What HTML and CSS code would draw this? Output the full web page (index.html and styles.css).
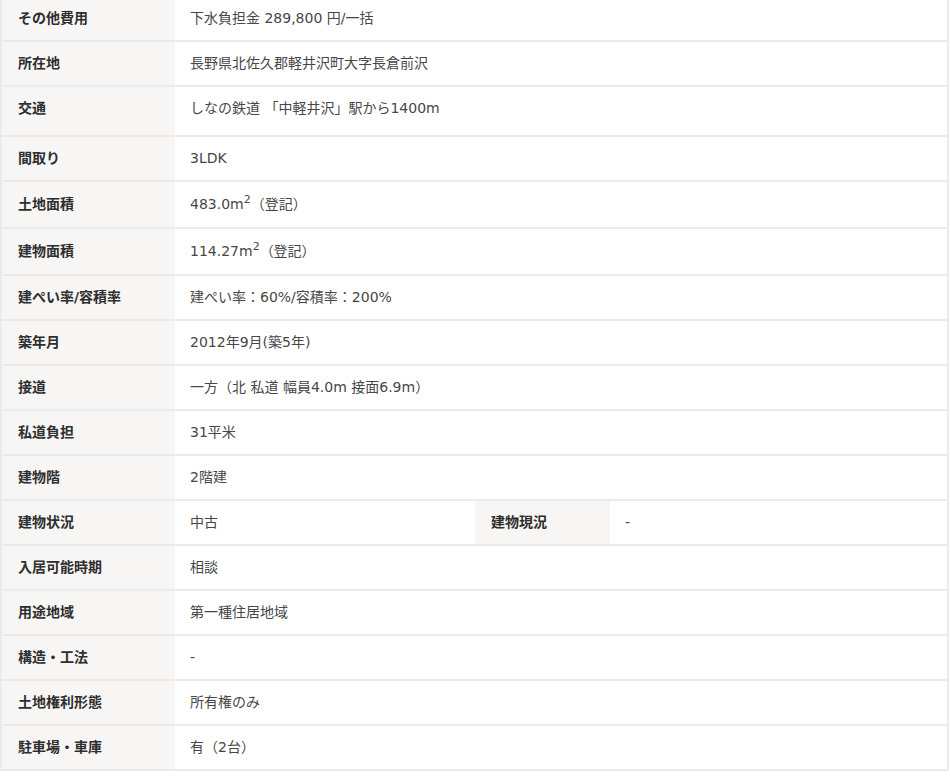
FILE: index.html
```html
<!DOCTYPE html>
<html lang="ja">
<head>
<meta charset="utf-8">
<title>物件概要</title>
<link rel="stylesheet" href="styles.css">
</head>
<body>
<table class="spec">
  <colgroup>
    <col class="c1"><col class="c2"><col class="c3"><col class="c4">
  </colgroup>
  <tbody>
    <tr><th>その他費用</th><td colspan="3">下水負担金 289,800 円/一括</td></tr>
    <tr><th>所在地</th><td colspan="3">長野県北佐久郡軽井沢町大字長倉前沢</td></tr>
    <tr class="tall"><th>交通</th><td colspan="3">しなの鉄道 「中軽井沢」駅から1400m</td></tr>
    <tr><th>間取り</th><td colspan="3">3LDK</td></tr>
    <tr class="sup-row"><th>土地面積</th><td colspan="3">483.0m<sup>2</sup>（登記）</td></tr>
    <tr class="sup-row"><th>建物面積</th><td colspan="3">114.27m<sup>2</sup>（登記）</td></tr>
    <tr><th>建ぺい率/容積率</th><td colspan="3">建ぺい率：60%/容積率：200%</td></tr>
    <tr><th>築年月</th><td colspan="3">2012年9月(築5年)</td></tr>
    <tr><th>接道</th><td colspan="3">一方（北 私道 幅員4.0m 接面6.9m）</td></tr>
    <tr><th>私道負担</th><td colspan="3">31平米</td></tr>
    <tr><th>建物階</th><td colspan="3">2階建</td></tr>
    <tr><th>建物状況</th><td>中古</td><th>建物現況</th><td>-</td></tr>
    <tr><th>入居可能時期</th><td colspan="3">相談</td></tr>
    <tr><th>用途地域</th><td colspan="3">第一種住居地域</td></tr>
    <tr><th>構造・工法</th><td colspan="3">-</td></tr>
    <tr><th>土地権利形態</th><td colspan="3">所有権のみ</td></tr>
    <tr><th>駐車場・車庫</th><td colspan="3">有（2台）</td></tr>
  </tbody>
</table>
</body>
</html>
```

FILE: styles.css
```css
html, body {
  margin: 0;
  padding: 0;
  background: #ffffff;
}

body {
  font-family: "DejaVu Sans", "Noto Sans CJK JP", sans-serif;
  font-size: 14px;
  color: #333333;
}

.spec {
  width: 949px;
  margin-top: -3px;
  table-layout: fixed;
  border-collapse: separate;
  border-spacing: 0;
  border-left: 2px solid #ebebeb;
  border-right: 2px solid #ebebeb;
}

.c1 { width: 173px; }
.c2 { width: 300px; }
.c3 { width: 135px; }
.c4 { width: 337px; }

.spec th,
.spec td {
  padding: 0 0 0 15px;
  height: 43px;
  line-height: 43px;
  border-bottom: 2px solid #ebebeb;
  text-align: left;
  vertical-align: top;
  white-space: nowrap;
}

.spec th {
  padding-left: 16px;
  background: #f7f6f4;
  font-weight: bold;
  color: #2e2e2e;
}

.spec td {
  font-weight: normal;
  color: #474747;
}

.spec tr.tall th,
.spec tr.tall td {
  height: 48px;
  line-height: 43px;
}

.spec tr.sup-row th,
.spec tr.sup-row td {
  height: 45px;
  line-height: 45px;
}

.spec sup {
  font-size: 11px;
  line-height: 0;
  vertical-align: 6px;
}
```
